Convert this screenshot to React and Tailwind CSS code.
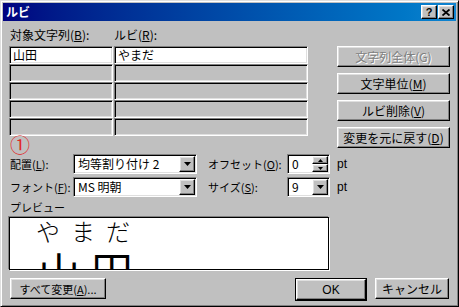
import React from 'react';

const raised =
  'border border-t-white border-l-white border-r-black border-b-black shadow-[inset_-1px_-1px_0_#808080,inset_1px_1px_0_#dfdfdf] bg-[#c0c0c0]';
const sunken =
  'border border-t-[#808080] border-l-[#808080] border-r-white border-b-white shadow-[inset_1px_1px_0_#000,inset_-1px_-1px_0_#dfdfdf]';

const Arrow = ({ up }) => (
  <svg width="7" height="4" viewBox="0 0 7 4">
    <path d={up ? 'M3.5 0 L7 4 L0 4 Z' : 'M0 0 L7 0 L3.5 4 Z'} fill="#000" />
  </svg>
);

const SmallArrow = ({ up }) => (
  <svg width="5" height="3" viewBox="0 0 5 3">
    <path d={up ? 'M2.5 0 L5 3 L0 3 Z' : 'M0 0 L5 0 L2.5 3 Z'} fill="#000" />
  </svg>
);

const Combo = ({ value, width }) => (
  <div className={`${sunken} ${width} shrink-0 h-[20px] bg-white flex items-center p-[1px]`}>
    <span className="flex-1 pl-[3px] leading-[14px] whitespace-nowrap">{value}</span>
    <div className={`${raised} w-[16px] h-[16px] flex items-center justify-center`}>
      <Arrow />
    </div>
  </div>
);

const Spin = ({ value }) => (
  <div className={`${sunken} w-[43px] shrink-0 h-[20px] bg-white flex items-center p-[1px]`}>
    <span className="flex-1 pl-[3px] leading-[14px]">{value}</span>
    <div className="flex flex-col w-[16px] h-[16px]">
      <div className={`${raised} h-[8px] flex items-center justify-center`}>
        <SmallArrow up />
      </div>
      <div className={`${raised} h-[8px] flex items-center justify-center`}>
        <SmallArrow />
      </div>
    </div>
  </div>
);

const Button = ({ children, className = '', disabled }) => (
  <div
    className={`${raised} ${className} shrink-0 h-[21px] flex items-center justify-center leading-[14px] whitespace-nowrap ${
      disabled ? 'text-[#808080] [text-shadow:1px_1px_0_#fff]' : 'text-black'
    }`}
  >
    {children}
  </div>
);

const Cell = ({ children, className, white }) => (
  <div
    className={`${sunken} ${className} h-[18px] flex items-center pl-[3px] leading-[14px] ${
      white ? 'bg-white' : 'bg-[#c0c0c0]'
    }`}
  >
    {children}
  </div>
);

export default function App() {
  const rows = [
    ['山田', 'やまだ'],
    ['', ''],
    ['', ''],
    ['', ''],
    ['', ''],
  ];

  return (
    <div className="w-[459px] h-[307px] bg-[#c0c0c0] border border-t-[#dfdfdf] border-l-[#dfdfdf] border-r-black border-b-black shadow-[inset_1px_1px_0_#fff,inset_-1px_-1px_0_#808080] p-[2px] font-['Noto_Sans_CJK_JP',sans-serif] text-[12px] text-black overflow-hidden">
      {/* title bar */}
      <div className="h-[18px] flex items-center justify-between bg-gradient-to-r from-[#000080] to-[#1084d0] pl-[3px] pr-[2px]">
        <span className="text-white font-bold leading-[14px]">ルビ</span>
        <div className="flex gap-[1px]">
          <div className={`${raised} w-[16px] h-[14px] flex items-center justify-center`}>
            <span className="font-['Liberation_Sans',sans-serif] font-bold text-[11px] leading-[11px]">?</span>
          </div>
          <div className={`${raised} w-[16px] h-[14px] flex items-center justify-center`}>
            <svg width="8" height="7" viewBox="0 0 8 7">
              <path d="M0.5 0.5 L7.5 6.5 M7.5 0.5 L0.5 6.5" stroke="#000" strokeWidth="1.8" />
            </svg>
          </div>
        </div>
      </div>

      <div className="pl-[6px]">
        <div className="flex mt-[7px] h-[14px] leading-[14px]">
          <span className="w-[105px] pl-[1px]">
            対象文字列(<u>B</u>):
          </span>
          <span>
            ルビ(<u>R</u>):
          </span>
        </div>

        <div className="flex mt-[4px]">
          <div className="w-[299px]">
            <div className="flex flex-col">
              {rows.map(([base, ruby], i) => (
                <div key={i} className="flex gap-[1px]">
                  <Cell className="w-[104px]" white={i === 0}>
                    {base}
                  </Cell>
                  <Cell className="w-[194px]" white={i === 0}>
                    {ruby}
                  </Cell>
                </div>
              ))}
            </div>
            <div className="h-[17px] pl-[1px] text-[#e02828] text-[20px] leading-[18px]">①</div>
          </div>
          <div className="ml-[29px] w-[113px] flex flex-col gap-[6px]">
            <Button disabled>文字列全体(G)</Button>
            <Button>
              文字単位(<u>M</u>)
            </Button>
            <Button>
              ルビ削除(<u>V</u>)
            </Button>
            <Button>
              変更を元に戻す(<u>D</u>)
            </Button>
          </div>
        </div>

        <div className="flex items-center mt-[1px]">
          <span className="w-[64px] shrink-0 pl-[1px] leading-[14px] whitespace-nowrap text-[11px]">
            配置(<u>L</u>):
          </span>
          <Combo value="均等割り付け 2" width="w-[124px]" />
          <span className="ml-[11px] w-[79px] shrink-0 leading-[14px] whitespace-nowrap text-[11px]">
            オフセット(<u>O</u>):
          </span>
          <Spin value="0" />
          <span className="ml-[7px] leading-[14px] font-['Liberation_Sans',sans-serif]">pt</span>
        </div>

        <div className="flex items-center mt-[3px]">
          <span className="w-[64px] shrink-0 pl-[1px] leading-[14px] whitespace-nowrap text-[11px]">
            フォント(<u>F</u>):
          </span>
          <Combo value="MS 明朝" width="w-[124px]" />
          <span className="ml-[11px] w-[79px] shrink-0 leading-[14px] whitespace-nowrap text-[11px]">
            サイズ(<u>S</u>):
          </span>
          <Combo value="9" width="w-[43px]" />
          <span className="ml-[7px] leading-[14px] font-['Liberation_Sans',sans-serif]">pt</span>
        </div>

        <div className="mt-[3px] h-[14px] pl-[1px] leading-[14px] text-[11px]">プレビュー</div>

        <div className="mt-[3px] w-[320px] h-[53px] bg-white border border-black shadow-[-1px_-1px_0_#808080,1px_1px_0_#fff] overflow-hidden">
          <div className="pl-[26px] pt-[1px] text-[24px] leading-[24px] tracking-[11px] font-light whitespace-nowrap">やまだ</div>
          <div className="pl-[28px] mt-[6px] text-[42px] leading-[42px] tracking-[11px] whitespace-nowrap">山田</div>
        </div>

        <div className="flex mt-[8px]">
          <Button className="ml-[1px] w-[96px] text-[11px]">
            すべて変更(<u>A</u>)...
          </Button>
          <div className="ml-[189px] border border-black shrink-0">
            <Button className="w-[70px] h-[19px] font-['Liberation_Sans',sans-serif]">OK</Button>
          </div>
          <Button className="ml-[8px] w-[74px]">キャンセル</Button>
        </div>
      </div>
    </div>
  );
}
